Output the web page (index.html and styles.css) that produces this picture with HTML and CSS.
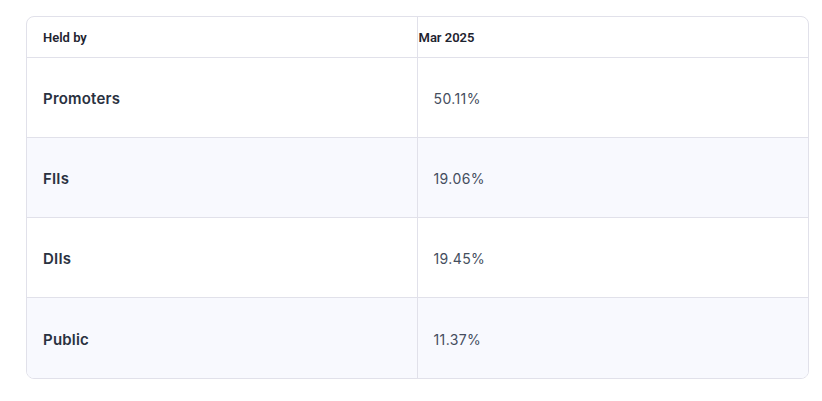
FILE: index.html
```html
<!DOCTYPE html>
<html lang="en">
<head>
<meta charset="UTF-8" /><meta name="viewport" content="width=device-width, initial-scale=1.0" />
<title>Shareholding</title>
<link rel="stylesheet" href="styles.css">
</head>
<body>
<div class="wrap">
<table class="holding">
<thead>
<tr><th>Held by</th><th class="date">Mar 2025</th></tr>
</thead>
<tbody>
<tr><td>Promoters</td><td>50.11%</td></tr>
<tr><td>FIIs</td><td>19.06%</td></tr>
<tr><td>DIIs</td><td>19.45%</td></tr>
<tr><td>Public</td><td>11.37%</td></tr>
</tbody>
</table>
</div>
</body>
</html>
```
FILE: styles.css
```css
body { margin: 0; background: #fff; font-family: Inter, "Noto Sans", sans-serif; }
.wrap { padding: 16px 13px 0 26px; }
.holding { width: 783px; border-collapse: separate; border-spacing: 0; border: 1px solid #e1e1ea; border-radius: 8px; overflow: hidden; table-layout: fixed; }
.holding th { height: 40px; padding: 0 0 0 16px; text-align: left; font-family: Roboto, sans-serif; font-size: 13px; font-weight: 600; color: #1f2430; border-bottom: 1px solid #e1e1ea; }
.holding th.date { padding-left: 1px; }
.holding td { height: 77px; padding: 2px 0 0 16px; font-size: 14px; letter-spacing: 0.4px; color: #454e5e; border-bottom: 1px solid #e1e1ea; }
.holding tbody tr:last-child td { height: 78px; }
.holding td:first-child { font-size: 15px; letter-spacing: 0.2px; font-weight: 600; color: #2a3140; }
.holding th:first-child, .holding td:first-child { border-right: 1px solid #e1e1ea; }
.holding tbody tr:nth-child(even) td { background: #f8f9fe; }
.holding tbody tr:last-child td { border-bottom: none; }
```
